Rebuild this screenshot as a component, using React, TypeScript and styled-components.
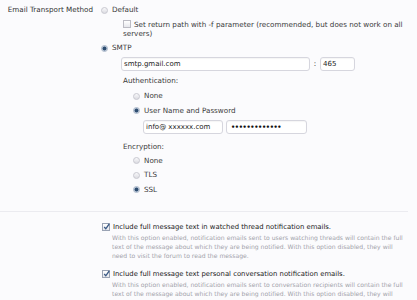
import React from "react";
import styled, { createGlobalStyle } from "styled-components";

const Global = createGlobalStyle`
  html, body { margin: 0; padding: 0; background: #fbfbfd; }
  body { font-family: "DejaVu Sans", Verdana, sans-serif; color: #3a3a3a; }
`;

const Page = styled.div`
  width: 417px;
  height: 300px;
  overflow: hidden;
  background: #fbfbfd;
  font-size: 7.2px;
  line-height: 10px;
`;

const FormRow = styled.div`
  display: grid;
  grid-template-columns: 93px 1fr;
  column-gap: 8px;
  padding-top: 5px;
`;

const RowLabel = styled.div`
  text-align: right;
  height: 10px;
  color: #333;
`;

const Controls = styled.div`
  display: flex;
  flex-direction: column;
  padding-right: 8px;
`;

const Option = styled.label<{ $mt?: number }>`
  display: flex;
  align-items: center;
  gap: 4px;
  height: 10px;
  margin-top: ${(p) => p.$mt ?? 0}px;
`;

const Radio = styled.span<{ $on?: boolean }>`
  width: 7px;
  height: 7px;
  border-radius: 50%;
  box-sizing: border-box;
  border: 1px solid ${(p) => (p.$on ? "#a9b6c8" : "#c8c8d0")};
  background: ${(p) =>
    p.$on
      ? "radial-gradient(circle at 50% 50%, #2e4d70 0 1.5px, #7d95b0 2px, #e6e9f0 2.5px)"
      : "linear-gradient(#f8f8fa, #dcdce2)"};
  flex: none;
`;

const Box = styled.span<{ $on?: boolean }>`
  position: relative;
  width: 8px;
  height: 8px;
  box-sizing: border-box;
  border: 1px solid ${(p) => (p.$on ? "#9aa3b4" : "#bcbcc4")};
  background: linear-gradient(#ffffff, #e6e7ec);
  flex: none;
`;

const Check = styled.svg`
  position: absolute;
  left: 0;
  top: -1px;
  width: 7px;
  height: 7px;
`;

const Sub = styled.div<{ $ml: number; $mt?: number }>`
  margin-left: ${(p) => p.$ml}px;
  margin-top: ${(p) => p.$mt ?? 0}px;
  display: flex;
  flex-direction: column;
`;

const WrapOption = styled.div`
  line-height: 9px;
`;

const InlineBox = styled(Box)`
  display: inline-block;
  vertical-align: -1px;
  margin-right: 3px;
`;

const InputLine = styled.div<{ $mt?: number; $ml?: number }>`
  display: flex;
  align-items: center;
  gap: ${(p) => (p.$ml ? 3 : 0)}px;
  margin-top: ${(p) => p.$mt ?? 0}px;
  margin-left: ${(p) => p.$ml ?? 0}px;
`;

const TextInput = styled.div<{ $w: number }>`
  width: ${(p) => p.$w}px;
  height: 14px;
  box-sizing: border-box;
  border: 1px solid #d6d6de;
  border-radius: 3px;
  background: #fff;
  box-shadow: inset 0 1px 1px rgba(0, 0, 0, 0.04);
  padding: 0 0 0 2px;
  display: flex;
  align-items: center;
  color: #222;
  font-size: 7px;
  white-space: nowrap;
  overflow: hidden;
`;

const Dots = styled.span`
  font-size: 6.6px;
  font-weight: bold;
  letter-spacing: -0.35px;
  color: #111;
  padding-left: 2px;
`;

const Colon = styled.span`
  width: 10px;
  text-align: center;
`;

const Heading = styled.div<{ $mt?: number; $ml?: number }>`
  height: 10px;
  margin-top: ${(p) => p.$mt ?? 0}px;
  margin-left: ${(p) => p.$ml ?? 0}px;
`;

const Separator = styled.hr`
  border: 0;
  border-top: 1px solid #ebebf0;
  margin: 16px 9px 0 0;
`;

const CheckBlock = styled.div<{ $mt: number }>`
  margin-left: 102px;
  margin-top: ${(p) => p.$mt}px;
`;

const CheckTitle = styled.label`
  display: flex;
  align-items: center;
  gap: 3px;
  height: 10px;
  color: #1a1a1a;
  font-size: 6.85px;
`;

const Desc = styled.p`
  margin: 1px 0 0 10px;
  font-size: 6.1px;
  line-height: 9px;
  color: #a2a2aa;
  white-space: nowrap;
`;

const CheckMark = () => (
  <Check viewBox="0 0 7 7">
    <path d="M1.2 4 L2.8 5.8 L6.2 1" fill="none" stroke="#3b5a86" strokeWidth="1.3" />
  </Check>
);

export default function App() {
  return (
    <Page>
      <Global />
      <FormRow>
        <RowLabel>Email Transport Method</RowLabel>
        <Controls>
          <Option>
            <Radio />
            <span>Default</span>
          </Option>
          <Sub $ml={22} $mt={4.5}>
            <WrapOption>
              <InlineBox />
              Set return path with -f parameter (recommended, but does not work on all servers)
            </WrapOption>
          </Sub>
          <Option $mt={5.5}>
            <Radio $on />
            <span>SMTP</span>
          </Option>
          <Sub $ml={20} $mt={4}>
            <InputLine>
              <TextInput $w={189}>smtp.gmail.com</TextInput>
              <Colon>:</Colon>
              <TextInput $w={35}>465</TextInput>
            </InputLine>
            <Heading $mt={5} $ml={2}>Authentication:</Heading>
            <Sub $ml={12} $mt={5}>
              <Option>
                <Radio />
                <span>None</span>
              </Option>
              <Option $mt={4.5}>
                <Radio $on />
                <span>User Name and Password</span>
              </Option>
              <InputLine $mt={4.5} $ml={10}>
                <TextInput $w={80}>info@ xxxxxx.com</TextInput>
                <TextInput $w={81}>
                  <Dots>•••••••••••••</Dots>
                </TextInput>
              </InputLine>
            </Sub>
            <Heading $mt={8} $ml={2}>Encryption:</Heading>
            <Sub $ml={12} $mt={3.5}>
              <Option>
                <Radio />
                <span>None</span>
              </Option>
              <Option $mt={4.5}>
                <Radio />
                <span>TLS</span>
              </Option>
              <Option $mt={4.5}>
                <Radio $on />
                <span>SSL</span>
              </Option>
            </Sub>
          </Sub>
        </Controls>
      </FormRow>
      <Separator />
      <CheckBlock $mt={10}>
        <CheckTitle>
          <Box $on>
            <CheckMark />
          </Box>
          <span>Include full message text in watched thread notification emails.</span>
        </CheckTitle>
        <Desc>
          With this option enabled, notification emails sent to users watching threads will contain the full
          <br />
          text of the message about which they are being notified. With this option disabled, they will
          <br />
          need to visit the forum to read the message.
        </Desc>
      </CheckBlock>
      <CheckBlock $mt={9}>
        <CheckTitle>
          <Box $on>
            <CheckMark />
          </Box>
          <span>Include full message text personal conversation notification emails.</span>
        </CheckTitle>
        <Desc>
          With this option enabled, notification emails sent to conversation recipients will contain the full
          <br />
          text of the message about which they are being notified. With this option disabled, they will
          <br />
          need to visit the forum to read the message.
        </Desc>
      </CheckBlock>
    </Page>
  );
}
